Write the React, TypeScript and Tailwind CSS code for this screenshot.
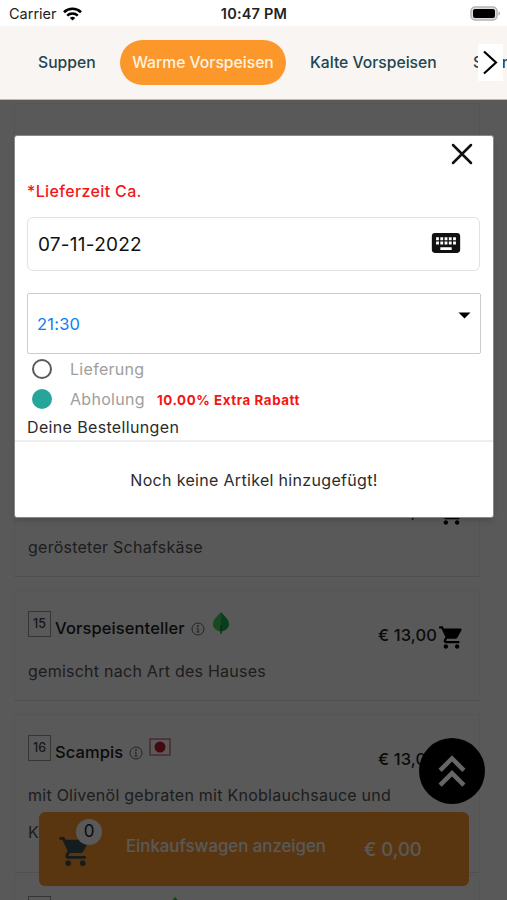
import { MdKeyboard, MdKeyboardDoubleArrowUp, MdShoppingCart } from "react-icons/md";

type Dish = {
  nr: number;
  name?: string;
  text: string;
  price: string;
  mark?: "leaf" | "flag";
};

const dishes: Dish[] = [
  { nr: 14, text: "gerösteter Schafskäse", price: "€ 13,00" },
  {
    nr: 15,
    name: "Vorspeisenteller",
    text: "gemischt nach Art des Hauses",
    price: "€ 13,00",
    mark: "leaf",
  },
  {
    nr: 16,
    name: "Scampis",
    text: "mit Olivenöl gebraten mit Knoblauchsauce und Kräutern",
    price: "€ 13,00",
    mark: "flag",
  },
];

function Leaf() {
  return (
    <svg width="16" height="22" viewBox="0 0 16 22">
      <path d="M8 0C5 4 0 7 0 12c0 4 3 7 8 7.500z" fill="#4fd05a" />
      <path d="M8 0c3 4 8 7 8 12 0 4-3.500 7-8 7.500z" fill="#14b060" />
      <path d="M8 13v9" stroke="#0a7a3a" strokeWidth="1.200" />
    </svg>
  );
}

function Flag() {
  return (
    <svg width="22" height="18" viewBox="0 0 22 18">
      <rect x="1" y="1" width="20" height="16" fill="#fff" stroke="#c8606a" strokeWidth="1.200" />
      <circle cx="11" cy="9" r="5.500" fill="#c01c30" />
    </svg>
  );
}

function Info() {
  return (
    <svg width="14" height="14" viewBox="0 0 14 14" fill="none" stroke="#666" strokeWidth="1">
      <circle cx="7" cy="7" r="6" />
      <path d="M5.700 6.200H7v3.700M5.400 10h3.200" />
      <circle cx="7" cy="4" r="0.500" fill="#666" />
    </svg>
  );
}

function DishCard({ dish }: { dish: Dish }) {
  return (
    <div className="mb-[13px] border border-[#f4f4f4] border-b-[#e6e6e6] px-[13px] pb-[10px] pt-5">
      <div className="flex h-[39px] items-start">
        <span className="flex h-[26px] w-[23px] items-center justify-center border border-[#999] text-[12.5px] font-medium text-[#444]">
          {dish.nr}
        </span>
        <span className="ml-[4px] mt-[5px] text-[16.5px] leading-6 font-medium tracking-[0.1px] text-[#222]">
          {dish.name}
        </span>
        {dish.name && (
          <span className="ml-[6px] mt-[11px]">
            <Info />
          </span>
        )}
        <span className={dish.mark === "flag" ? "ml-[6px] mt-[3px]" : "ml-[8px] mt-[1px]"}>
          {dish.mark === "leaf" && <Leaf />}
          {dish.mark === "flag" && <Flag />}
        </span>
        <span className="ml-auto mt-[12px] text-[16.5px] leading-6 font-medium tracking-[0.1px] text-[#222]">
          {dish.price}
        </span>
        <MdShoppingCart className="ml-px mr-px mt-[13px] size-[27px] text-black" />
      </div>
      <p className="mt-[3px] w-[375px] text-[16px] leading-[37px] tracking-[0.25px] text-[#555]">
        {dish.text}
      </p>
      {dish.text.length > 45 && <div className="h-[11px]" />}
    </div>
  );
}

function Header() {
  return (
    <header className="shrink-0">
      <div className="flex h-[26px] items-center bg-white text-[#222]">
        <div className="flex w-1/3 items-center gap-[6px] pl-[9px] pt-px">
          <span className="text-[14.5px]">Carrier</span>
          <svg width="19" height="14" viewBox="0 0 19 14" fill="none" stroke="#000" strokeWidth="2.600">
            <path d="M1 5.200a12.300 12.300 0 0 1 17 0" />
            <path d="M4.200 8.600a7.700 7.700 0 0 1 10.600 0" />
            <path d="M9.500 13.600 6.800 10.900a4 4 0 0 1 5.400 0z" fill="#000" stroke="none" />
          </svg>
        </div>
        <div className="w-1/3 pl-px pt-[2px] text-center text-[14.5px] font-semibold tracking-[0.2px]">
          10:47 PM
        </div>
        <div className="flex w-1/3 justify-end pr-[6px]">
          <svg width="31" height="15" viewBox="0 0 31 15">
            <rect x="1" y="1" width="26" height="13" rx="4" fill="#ddd" stroke="#b5b5b5" strokeWidth="1.500" />
            <rect x="3" y="3" width="22" height="9" rx="2" fill="#000" />
            <path d="M28.500 5.500c2 .5 2 3.500 0 4z" fill="#aaa" />
          </svg>
        </div>
      </div>
      <nav className="relative flex h-[74px] items-center overflow-hidden whitespace-nowrap border-b border-[#bbb] bg-[#f8f5f2] text-[15.7px] font-medium text-[#1d4650]">
        <span className="ml-[38px] w-[82px] shrink-0">Suppen</span>
        <span className="flex h-[45px] w-[166px] shrink-0 items-center justify-center rounded-full bg-[#fc982b] text-[#fff3e2]">
          Warme Vorspeisen
        </span>
        <span className="ml-6 w-[163px] shrink-0">Kalte Vorspeisen</span>
        <span className="shrink-0">Schnitzel</span>
        <button className="absolute right-1 top-[18px] flex h-[37px] w-[25px] items-center justify-center bg-white">
          <svg width="16" height="26" viewBox="0 0 16 26" fill="none" stroke="#000" strokeWidth="2.200">
            <path d="M1 1.500l12 11-12 11" />
          </svg>
        </button>
      </nav>
    </header>
  );
}

function CartBar() {
  return (
    <div className="absolute bottom-[14px] left-[39px] flex h-[74px] w-[430px] items-center rounded-md bg-[#ff9a2b] text-white">
      <div className="relative ml-[19px] mt-[5px]">
        <MdShoppingCart className="size-[35px] text-[#3c5258]" />
        <span className="absolute -top-[15px] left-[18px] flex size-[26px] items-center justify-center rounded-full bg-white text-[17px] text-[#222]">
          0
        </span>
      </div>
      <span className="ml-[33px] -mt-[5px] w-[238px] text-[16.8px] font-medium">Einkaufswagen anzeigen</span>
      <span className="mt-px text-[18.5px] font-medium">€ 0,00</span>
    </div>
  );
}

function OrderDialog() {
  return (
    <div className="absolute left-[14px] top-[35px] flex h-[383px] w-[480px] flex-col rounded-[3px] border border-[#888] bg-white text-[#2c2c2c] shadow-md">
      <button className="ml-auto mr-[20px] mt-[7px]">
        <svg width="22" height="22" viewBox="0 0 22 22" stroke="#111" strokeWidth="2.500" strokeLinecap="round">
          <path d="M2 2l18 18M20 2L2 20" />
        </svg>
      </button>
      <div className="px-[12px]">
        <div className="mt-[14px] text-[16px] leading-6 font-medium tracking-[0.35px] text-[#f01818]">
          *Lieferzeit Ca.
        </div>
        <div className="mr-px mt-[14px] flex h-[54px] items-center justify-between rounded-md border border-[#e2e2e2] pl-[10px] pr-[16px]">
          <span className="mt-[2px] text-[19px] tracking-[0.25px] text-[#111]">07-11-2022</span>
          <MdKeyboard className="-mt-[3px] size-[34px] text-[#111]" />
        </div>
        <div className="mt-[22px] flex h-[61px] justify-between rounded-[2px] border border-[#ccc] pl-[9px] pr-[9px]">
          <span className="mt-[18px] text-[16.5px] leading-6 tracking-[0.2px] text-[#0f7df5]">21:30</span>
          <svg className="mt-[18px]" width="13" height="7" viewBox="0 0 13 7">
            <path d="M0.500 0.500h12l-6 6z" fill="#000" />
          </svg>
        </div>
        <label className="flex h-[30px] items-center pl-[5px] text-[16px] tracking-[0.3px] text-[#9e9e9e]">
          <span className="mr-[18px] size-5 rounded-full border-[2.5px] border-[#5a5a5a]" />
          Lieferung
        </label>
        <label className="flex h-[30px] items-center pl-[5px] text-[16px] tracking-[0.3px] text-[#9e9e9e]">
          <span className="mr-[18px] size-5 rounded-full bg-[#26a69a]" />
          Abholung
          <b className="ml-[12px] mt-[3px] text-[13.3px] font-bold tracking-[0.6px] text-[#f51414]">
            10.00% Extra Rabatt
          </b>
        </label>
        <div className="h-[26px] text-[16px] leading-[26px] tracking-[0.35px]">Deine Bestellungen</div>
      </div>
      <div className="flex flex-1 items-center justify-center border-t-2 border-[#eee] text-[16px] tracking-[0.32px]">
        Noch keine Artikel hinzugefügt!
      </div>
    </div>
  );
}

export default function App() {
  return (
    <div className="flex h-[900px] w-[507px] flex-col overflow-hidden bg-white font-['Inter',sans-serif]">
      <Header />
      <main className="relative flex-1 overflow-hidden">
        <div className="w-[480px] pl-[14px] pt-[3px]">
          <div className="mb-[13px] h-[350px] border border-[#f4f4f4]" />
          {dishes.map((dish) => (
            <DishCard key={dish.nr} dish={dish} />
          ))}
          <div className="-mt-[11px]">
            <DishCard dish={{ nr: 17, name: "Pilzpfanne", text: "", price: "", mark: "leaf" }} />
          </div>
        </div>
        <CartBar />
        <div className="absolute inset-0 bg-black/65" />
        <button className="absolute left-[419px] top-[638px] flex size-[66px] items-center justify-center rounded-full bg-black text-[#666]">
          <MdKeyboardDoubleArrowUp className="size-[54px]" />
        </button>
        <OrderDialog />
      </main>
    </div>
  );
}
